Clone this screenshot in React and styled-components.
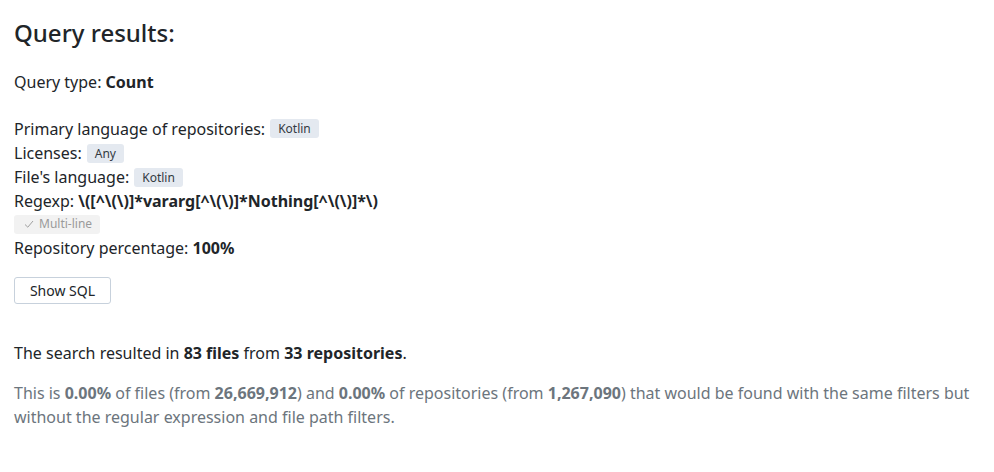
import React from 'react';
import styled, { createGlobalStyle } from 'styled-components';

const GlobalStyle = createGlobalStyle`
  body {
    margin: 0;
    background: #ffffff;
    font-family: 'Noto Sans', sans-serif;
    color: #212529;
  }
`;

const Page = styled.div`
  padding: 18px 14px;
`;

const Title = styled.h2`
  margin: 0 0 22px 0;
  font-size: 24px;
  font-weight: 500;
  line-height: 30px;
`;

const Line = styled.div`
  font-size: 16px;
  line-height: 24px;
  display: flex;
  align-items: center;
  gap: 4px;
  min-height: ${(p) => p.$h || 24}px;
`;

const QueryType = styled(Line)`
  margin-bottom: 22px;
`;

const Filters = styled.div`
  display: flex;
  flex-direction: column;
`;

const Tag = styled.span`
  display: inline-flex;
  align-items: center;
  height: 19px;
  padding: 0 8px;
  margin-left: 1px;
  border-radius: 3px;
  background: #e4e9f0;
  color: #333a42;
  font-size: 12px;
  line-height: 19px;
`;

const Option = styled.span`
  display: inline-flex;
  align-items: center;
  gap: 5px;
  height: 19px;
  padding: 0 8px 0 10px;
  border-radius: 3px;
  background: #f2f2f2;
  color: #9a9a9a;
  font-size: 12px;
`;

const Button = styled.button`
  margin-top: 16px;
  width: 97px;
  height: 27px;
  padding: 0;
  border: 1px solid #c7d1dc;
  border-radius: 3px;
  background: #ffffff;
  color: #212529;
  font-family: 'Noto Sans', sans-serif;
  font-size: 14px;
`;

const Summary = styled.p`
  margin: 37px 0 0 0;
  font-size: 16px;
  line-height: 24px;
`;

const Note = styled.p`
  margin: 16px 0 0 0;
  font-size: 16px;
  line-height: 24px;
  color: #6c757d;
`;

const Check = () => (
  <svg width="10" height="10" viewBox="0 0 10 10" fill="none" stroke="#a0a0a0" strokeWidth="1">
    <path d="M1 5.5 L3.8 8.2 L9 2" />
  </svg>
);

export default function App() {
  return (
    <Page>
      <GlobalStyle />
      <Title>Query results:</Title>
      <QueryType>
        <span>Query type: <b>Count</b></span>
      </QueryType>
      <Filters>
        <Line $h={25}>Primary language of repositories: <Tag>Kotlin</Tag></Line>
        <Line $h={24}>Licenses: <Tag>Any</Tag></Line>
        <Line $h={24}>File's language: <Tag>Kotlin</Tag></Line>
        <Line $h={24}>
          <span>Regexp: <b>{'\\([^\\(\\)]*vararg[^\\(\\)]*Nothing[^\\(\\)]*\\)'}</b></span>
        </Line>
        <Line $h={22}>
          <Option><Check />Multi-line</Option>
        </Line>
        <Line $h={26}>
          <span>Repository percentage: <b>100%</b></span>
        </Line>
      </Filters>
      <Button>Show SQL</Button>
      <Summary>
        The search resulted in <b>83 files</b> from <b>33 repositories</b>.
      </Summary>
      <Note>
        This is <b>0.00%</b> of files (from <b>26,669,912</b>) and <b>0.00%</b> of repositories (from{' '}
        <b>1,267,090</b>) that would be found with the same filters but without the regular expression and
        file path filters.
      </Note>
    </Page>
  );
}
